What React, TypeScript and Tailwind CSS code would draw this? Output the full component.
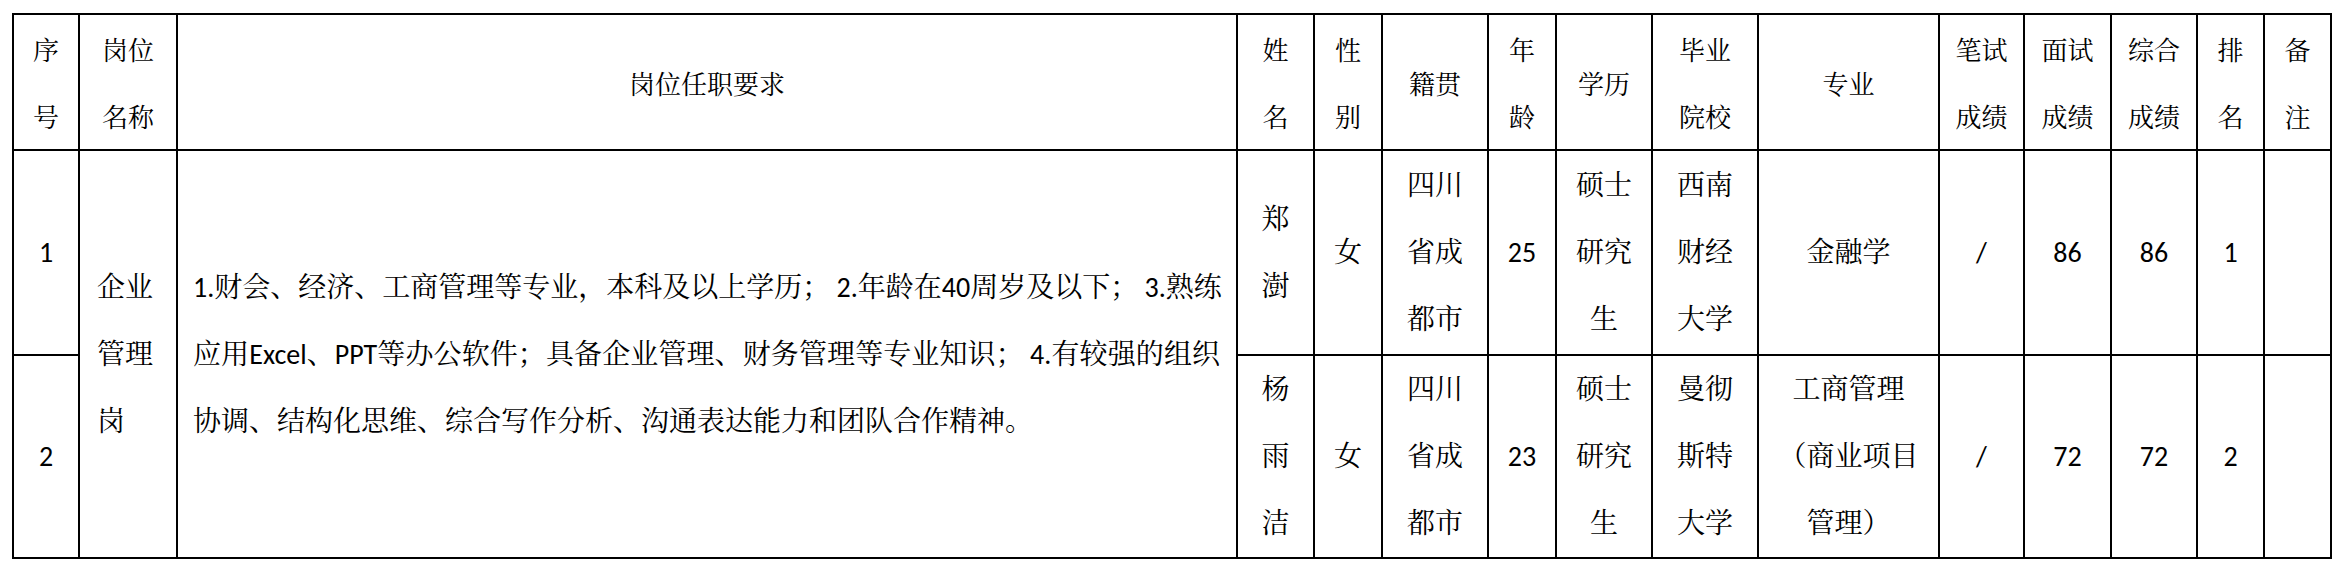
import React from "react";

const cols = [66, 98, 1060, 77, 68, 106, 68, 96, 106, 181, 85, 87, 86, 67, 67];

const cell = "border-2 border-black p-0 text-center align-middle";
const head = `${cell} font-normal text-[26px] leading-[67px] font-['Noto_Serif_CJK_SC','Noto_Sans_CJK_SC',serif]`;
const body = `${cell} text-[28px] leading-[67px] font-['Carlito','Lato','Noto_Serif_CJK_SC','Noto_Sans_CJK_SC',sans-serif]`;

function Lines({ items }: { items: string[] }) {
  return (
    <>
      {items.map((t, i) => (
        <div key={i}>{t}</div>
      ))}
    </>
  );
}

export default function App() {
  return (
    <div className="w-[2342px] h-[563px] bg-white text-black pl-[12px] pt-[13px]">
      <table className="table-fixed border-collapse w-[2320px]">
        <colgroup>
          {cols.map((w, i) => (
            <col key={i} style={{ width: `${w}px` }} />
          ))}
        </colgroup>
        <thead>
          <tr className="h-[135px]">
            <th className={head}><Lines items={["序", "号"]} /></th>
            <th className={head}><Lines items={["岗位", "名称"]} /></th>
            <th className={head}>岗位任职要求</th>
            <th className={head}><Lines items={["姓", "名"]} /></th>
            <th className={head}><Lines items={["性", "别"]} /></th>
            <th className={head}>籍贯</th>
            <th className={head}><Lines items={["年", "龄"]} /></th>
            <th className={head}>学历</th>
            <th className={head}><Lines items={["毕业", "院校"]} /></th>
            <th className={head}>专业</th>
            <th className={head}><Lines items={["笔试", "成绩"]} /></th>
            <th className={head}><Lines items={["面试", "成绩"]} /></th>
            <th className={head}><Lines items={["综合", "成绩"]} /></th>
            <th className={head}><Lines items={["排", "名"]} /></th>
            <th className={head}><Lines items={["备", "注"]} /></th>
          </tr>
        </thead>
        <tbody>
          <tr className="h-[205px]">
            <td className={body}>1</td>
            <td rowSpan={2} className={`${body} !text-left pl-[17px]`}>
              <Lines items={["企业", "管理", "岗"]} />
            </td>
            <td rowSpan={2} className={`${body} !text-left pl-[15px] pr-[16px]`}>
              <div className="whitespace-nowrap [text-align-last:justify]">
                1.财会、经济、工商管理等专业，本科及以上学历； 2.年龄在40周岁及以下； 3.熟练
              </div>
              <div className="whitespace-nowrap [text-align-last:justify]">
                应用Excel、PPT等办公软件；具备企业管理、财务管理等专业知识； 4.有较强的组织
              </div>
              <div className="whitespace-nowrap">
                协调、结构化思维、综合写作分析、沟通表达能力和团队合作精神。
              </div>
            </td>
            <td className={body}><Lines items={["郑", "澍"]} /></td>
            <td className={body}>女</td>
            <td className={body}><Lines items={["四川", "省成", "都市"]} /></td>
            <td className={body}>25</td>
            <td className={body}><Lines items={["硕士", "研究", "生"]} /></td>
            <td className={body}><Lines items={["西南", "财经", "大学"]} /></td>
            <td className={body}>金融学</td>
            <td className={body}>/</td>
            <td className={body}>86</td>
            <td className={body}>86</td>
            <td className={body}>1</td>
            <td className={body}></td>
          </tr>
          <tr className="h-[203px]">
            <td className={body}>2</td>
            <td className={body}><Lines items={["杨", "雨", "洁"]} /></td>
            <td className={body}>女</td>
            <td className={body}><Lines items={["四川", "省成", "都市"]} /></td>
            <td className={body}>23</td>
            <td className={body}><Lines items={["硕士", "研究", "生"]} /></td>
            <td className={body}><Lines items={["曼彻", "斯特", "大学"]} /></td>
            <td className={body}><Lines items={["工商管理", "（商业项目", "管理）"]} /></td>
            <td className={body}>/</td>
            <td className={body}>72</td>
            <td className={body}>72</td>
            <td className={body}>2</td>
            <td className={body}></td>
          </tr>
        </tbody>
      </table>
    </div>
  );
}
